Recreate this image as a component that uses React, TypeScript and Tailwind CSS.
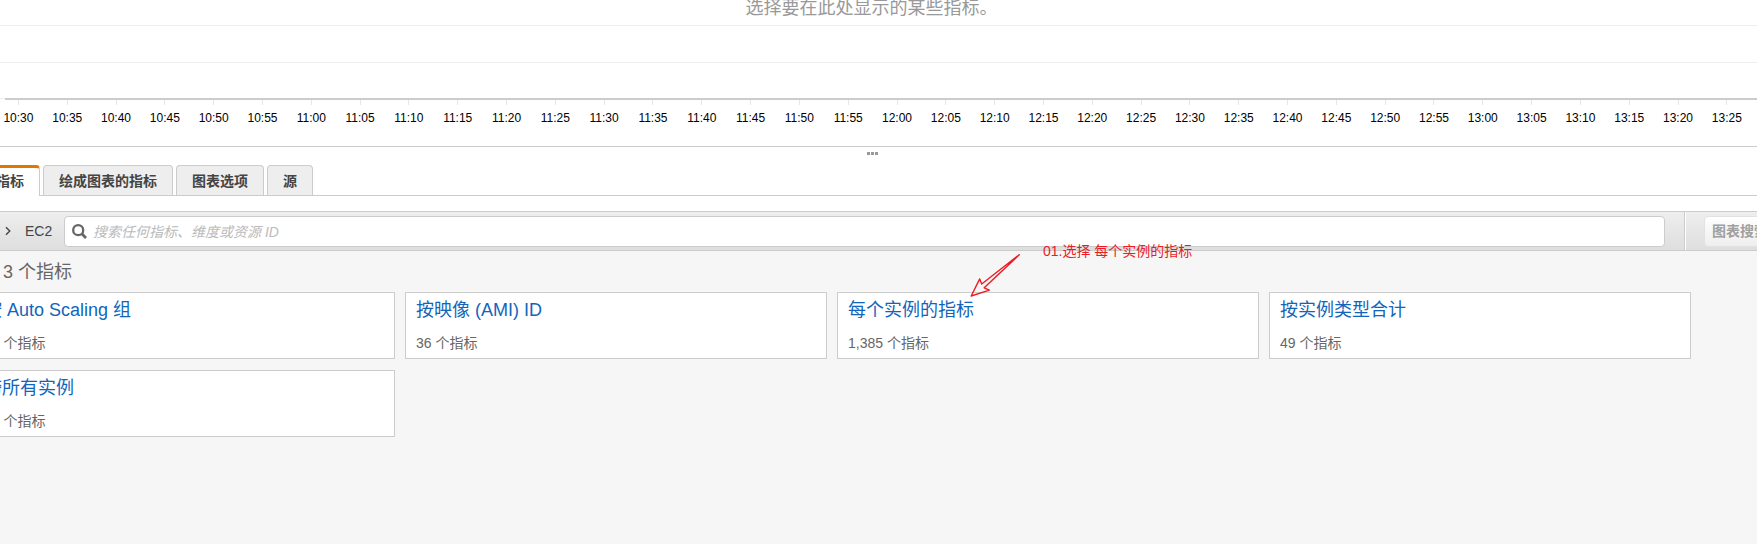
import React from "react";

const times: string[] = Array.from({ length: 36 }, (_, i) => {
  const minutes = 10 * 60 + 30 + i * 5;
  return `${Math.floor(minutes / 60)}:${String(minutes % 60).padStart(2, "0")}`;
});

const tabs = ["绘成图表的指标", "图表选项", "源"];

const groups = [
  { title: "按 Auto Scaling 组", count: "16" },
  { title: "按映像 (AMI) ID", count: "36" },
  { title: "每个实例的指标", count: "1,385" },
  { title: "按实例类型合计", count: "49" },
  { title: "跨所有实例", count: "27" },
];

function Chart() {
  return (
    <section className="-ml-1.5 mr-1.5 h-[146px]">
      <div className="-mr-1.5 h-[26px] border-b border-[#eee]">
        <p className="mr-2 text-center text-[18px] leading-4 text-[#999]">
          选择要在此处显示的某些指标。
        </p>
      </div>
      <div className="-mr-1.5 h-[37px] border-b border-[#eee]" />
      <div className="-mr-1.5 flex h-[37px]">
        <div className="h-9 w-[11px] border-b border-[#eee]" />
        <div className="flex-1 border-b-2 border-[#ccc]" />
      </div>
      <div className="flex">
        {times.map((t) => (
          <div key={t} className="flex flex-1 flex-col items-center">
            <span className="h-[5px] w-px bg-[#e6e6e6]" />
            <span className="mt-1 text-[12px] leading-[18px] text-black">{t}</span>
          </div>
        ))}
      </div>
    </section>
  );
}

function Splitter() {
  return (
    <div className="flex h-[19px] justify-center gap-px border-t border-[#ccc] pr-3 pt-[5px]">
      <span className="size-[3px] bg-[#999]" />
      <span className="size-[3px] bg-[#999]" />
      <span className="size-[3px] bg-[#999]" />
    </div>
  );
}

function Tabs() {
  return (
    <nav className="flex h-[31px] gap-[3px] border-b border-[#ccc] text-[14px] font-bold text-[#444]" role="tablist">
      <button
        role="tab"
        aria-selected="true"
        className="-mb-px -ml-5 flex w-[60px] justify-end rounded-t border-r border-t-[3px] border-r-[#ccc] border-t-[#e07700] bg-white pr-[15px] leading-[26px]"
      >
        指标
      </button>
      {tabs.map((t) => (
        <button
          key={t}
          role="tab"
          aria-selected="false"
          className="rounded-t border border-b-0 border-[#ccc] bg-[#eee] px-[15px] leading-[30px]"
        >
          {t}
        </button>
      ))}
    </nav>
  );
}

function Toolbar() {
  return (
    <div className="mt-[15px] flex h-10 border-y border-[#ccc] bg-linear-to-b from-[#eee] to-[#dedede] text-[14px] text-[#444]">
      <div className="flex w-16 shrink-0 items-center gap-3.5 pl-[5px]">
        <svg width="6" height="10" viewBox="0 0 6 10" fill="none" stroke="#444" strokeWidth="1.4" aria-hidden="true">
          <path d="M1 1.2 4.8 5 1 8.8" />
        </svg>
        <a href="#ec2" className="leading-5">EC2</a>
      </div>
      <label className="mt-1 flex h-[31px] flex-1 items-center gap-1.5 rounded border border-[#ccc] bg-white pl-[7px]">
        <svg width="15" height="15" viewBox="0 0 15 15" fill="none" stroke="#666" aria-hidden="true">
          <circle cx="6.2" cy="6.2" r="5" strokeWidth="2.3" />
          <path d="M9.8 9.8 14 14" strokeWidth="2.7" />
        </svg>
        <input
          type="text"
          aria-label="搜索"
          placeholder="搜索任何指标、维度或资源 ID"
          className="h-full min-w-0 flex-1 bg-transparent italic outline-none placeholder:text-[#bbb]"
        />
      </label>
      <div className="ml-[19px] flex w-[73px] shrink-0 overflow-hidden border-l border-[#ccc]">
        <div className="flex w-full border-l border-white pl-[18px] pt-1">
          <button
            disabled
            className="h-[31px] w-24 shrink-0 whitespace-nowrap rounded border border-[#e2e2e2] bg-linear-to-b from-white to-[#eee] pl-[7px] text-left font-bold text-[#a0a0a0]"
          >
            图表搜索
          </button>
        </div>
      </div>
    </div>
  );
}

function Groups() {
  return (
    <main className="flex-1 pb-6">
      <h2 className="pl-[3px] pt-2 text-[18px] leading-[26px] text-[#666]">3 个指标</h2>
      <div className="-ml-[27px] mr-[66px] mt-[7px] grid grid-cols-4 gap-x-2.5 gap-y-[11px]">
        {groups.map((g) => (
          <article key={g.title} className="h-[67px] border border-[#ccc] bg-white px-2.5 pt-1">
            <a href="#group" className="block text-[18px] leading-[26px] text-[#1166bb]">
              {g.title}
            </a>
            <p className="mt-2.5 text-[14px] leading-5 text-[#666]">{g.count} 个指标</p>
          </article>
        ))}
      </div>
    </main>
  );
}

function Annotation() {
  return (
    <div className="pointer-events-none absolute left-[968px] top-[240px] flex text-[#ed1c24]">
      <svg width="55" height="60" viewBox="968 240 55 60" fill="none" stroke="#ed1c24" strokeWidth="1.4" strokeLinejoin="round" aria-hidden="true">
        <path d="M1019.3 254.7 981.7 284 979.7 278.9 971.2 296 989.4 290.2 984.2 287.8Z" />
      </svg>
      <span className="ml-5 whitespace-nowrap text-[14px] leading-[22px]">01.选择 每个实例的指标</span>
    </div>
  );
}

export default function App() {
  return (
    <div className="relative flex min-h-screen flex-col overflow-hidden bg-[#f6f6f6] font-['Liberation_Sans','Noto_Sans_CJK_SC',sans-serif]">
      <div className="bg-white">
        <Chart />
        <Splitter />
        <Tabs />
        <Toolbar />
      </div>
      <Groups />
      <Annotation />
    </div>
  );
}
